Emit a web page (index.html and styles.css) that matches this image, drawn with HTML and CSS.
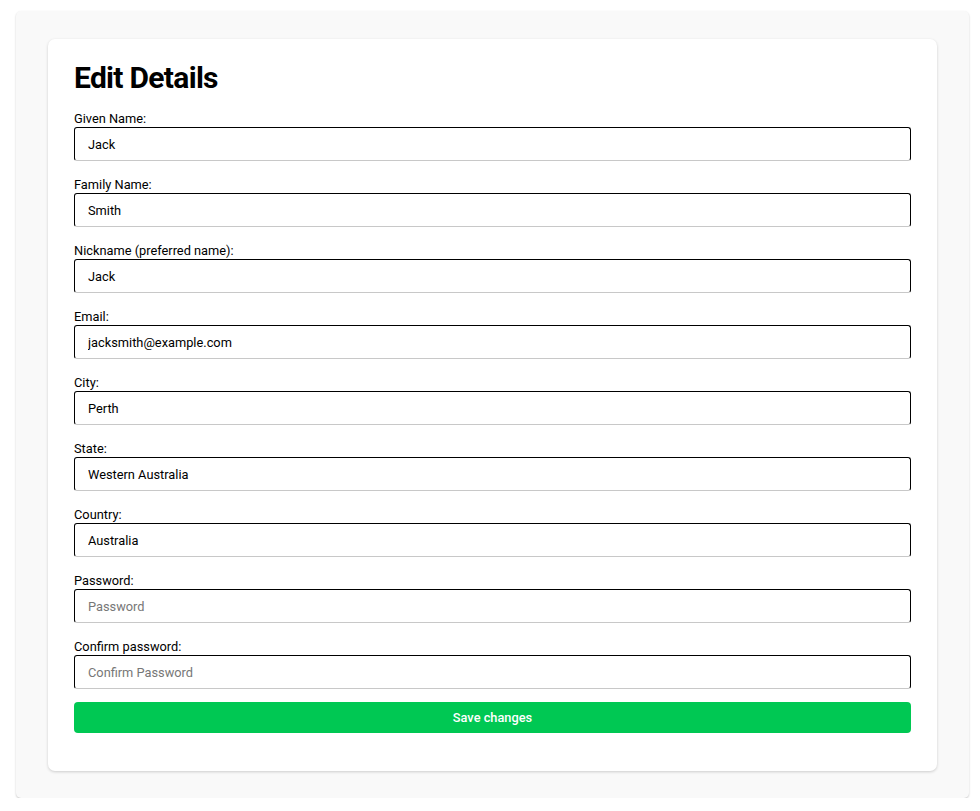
FILE: index.html
```html
<!DOCTYPE html>
<html>
<head>
<meta charset="utf-8">
<link rel="stylesheet" href="styles.css">
</head>
<body>
<div class="outer">
  <div class="card">
    <h1 class="title">Edit Details</h1>
    <form class="form">
      <label class="field"><span class="label">Given Name:</span><input class="input" type="text" value="Jack"></label>
      <label class="field"><span class="label">Family Name:</span><input class="input" type="text" value="Smith"></label>
      <label class="field"><span class="label">Nickname (preferred name):</span><input class="input" type="text" value="Jack"></label>
      <label class="field"><span class="label">Email:</span><input class="input" type="text" value="jacksmith@example.com"></label>
      <label class="field"><span class="label">City:</span><input class="input" type="text" value="Perth"></label>
      <label class="field"><span class="label">State:</span><input class="input" type="text" value="Western Australia"></label>
      <label class="field"><span class="label">Country:</span><input class="input" type="text" value="Australia"></label>
      <label class="field"><span class="label">Password:</span><input class="input" type="password" placeholder="Password"></label>
      <label class="field"><span class="label">Confirm password:</span><input class="input" type="password" placeholder="Confirm Password"></label>
      <button class="save" type="button">Save changes</button>
    </form>
  </div>
</div>
</body>
</html>
```
FILE: styles.css
```css
* { box-sizing: border-box; }
html, body { margin: 0; padding: 0; background: #fff; }
body {
  font-family: Roboto, "Liberation Sans", sans-serif;
  color: #000;
  padding: 11px 11px 0 16px;
}
.outer {
  width: 953px;
  height: 787px;
  background: #f9f9f9;
  border-radius: 5px;
  box-shadow: 0 1px 2px rgba(0,0,0,0.22);
  padding: 28px 32px 0 32px;
}
.card {
  background: #fff;
  border-radius: 7px;
  box-shadow: 0 1px 3px rgba(0,0,0,0.18);
  height: 732px;
  padding: 21px 26px 0 26px;
}
.title {
  margin: 0 0 15px 0;
  font-size: 30px;
  font-weight: 700;
  line-height: 36px;
  letter-spacing: -0.7px;
}
.form { display: flex; flex-direction: column; }
.field { display: flex; flex-direction: column; margin-bottom: 16px; }
.label {
  font-size: 12.8px;
  line-height: 15px;
  margin-bottom: 1px;
}
.input {
  height: 34px;
  border: 1px solid #000;
  border-bottom-color: #c8c8c8;
  border-radius: 3px;
  padding: 0 13px;
  font-family: Roboto, "Liberation Sans", sans-serif;
  font-size: 12.8px;
  color: #000;
  outline: none;
}
.input::placeholder { color: #777; }
.save {
  margin-top: -3px;
  height: 31px;
  border: none;
  border-radius: 4px;
  background: #00c853;
  color: #fff;
  font-family: Roboto, "Liberation Sans", sans-serif;
  font-size: 12.8px;
  font-weight: 500;
}
```
